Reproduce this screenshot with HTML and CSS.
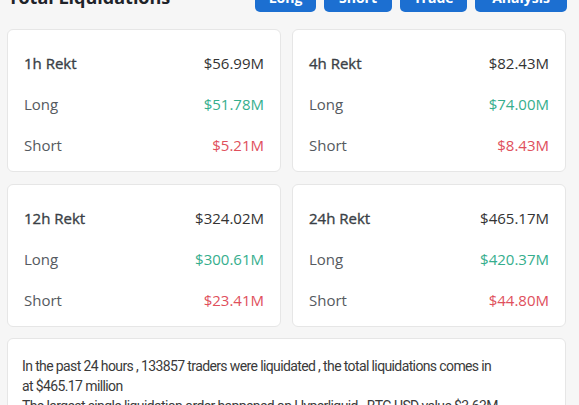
FILE: index.html
```html
<!DOCTYPE html>
<html>
<head>
<meta charset="utf-8">
<link rel="stylesheet" href="styles.css">
</head>
<body>
<div class="page">
  <div class="header">
    <h1 class="title">Total Liquidations</h1>
    <div class="actions">
      <button class="btn btn-long">Long</button>
      <button class="btn btn-short">Short</button>
      <button class="btn btn-trade">Trade</button>
      <button class="btn btn-analysis">Analysis</button>
    </div>
  </div>
  <div class="grid">
    <div class="card">
      <div class="row"><span class="label head">1h Rekt</span><span class="value">$56.99M</span></div>
      <div class="row"><span class="label">Long</span><span class="value up">$51.78M</span></div>
      <div class="row"><span class="label">Short</span><span class="value down">$5.21M</span></div>
    </div>
    <div class="card">
      <div class="row"><span class="label head">4h Rekt</span><span class="value">$82.43M</span></div>
      <div class="row"><span class="label">Long</span><span class="value up">$74.00M</span></div>
      <div class="row"><span class="label">Short</span><span class="value down">$8.43M</span></div>
    </div>
    <div class="card">
      <div class="row"><span class="label head">12h Rekt</span><span class="value">$324.02M</span></div>
      <div class="row"><span class="label">Long</span><span class="value up">$300.61M</span></div>
      <div class="row"><span class="label">Short</span><span class="value down">$23.41M</span></div>
    </div>
    <div class="card">
      <div class="row"><span class="label head">24h Rekt</span><span class="value">$465.17M</span></div>
      <div class="row"><span class="label">Long</span><span class="value up">$420.37M</span></div>
      <div class="row"><span class="label">Short</span><span class="value down">$44.80M</span></div>
    </div>
  </div>
  <div class="summary">
    <p>In the past 24 hours , 133857 traders were liquidated , the total liquidations comes in at $465.17 million</p>
    <p>The largest single liquidation order happened on Hyperliquid - BTC-USD value $3.63M</p>
  </div>
</div>
</body>
</html>
```
FILE: styles.css
```css
* { box-sizing: border-box; }
html, body { margin: 0; padding: 0; }
body {
  background: #f6f6f6;
  font-family: "Open Sans", "Noto Sans", sans-serif;
  color: #333;
  overflow: hidden;
}
.page {
  padding: 0 13px 0 7px;
}
.header {
  display: flex;
  justify-content: space-between;
  align-items: flex-end;
  margin-top: -18px;
  height: 30px;
}
.title {
  margin: 0 0 0 1px;
  font-size: 18px;
  font-weight: 700;
  line-height: 24px;
  color: #1e2329;
  position: relative;
  top: -3px;
}
.actions {
  display: flex;
  gap: 8px;
  margin-right: -1px;
}
.btn {
  height: 30px;
  border: none;
  border-radius: 5px;
  background: #1c6fd1;
  color: #fff;
  font-family: "Open Sans", sans-serif;
  font-size: 14px;
  font-weight: 700;
  padding: 0;
}
.btn-long { width: 61px; }
.btn-short { width: 68px; }
.btn-trade { width: 67px; }
.btn-analysis { width: 92px; }
.grid {
  display: grid;
  grid-template-columns: 1fr 1fr;
  column-gap: 11px;
  row-gap: 12px;
  margin-top: 17px;
}
.card {
  background: #fff;
  border: 1px solid #e6e6e6;
  border-radius: 6px;
  padding: 12px 16px 6px;
}
.row {
  display: flex;
  justify-content: space-between;
  align-items: center;
  height: 41px;
  font-size: 15px;
}
.label { color: #555a60; }
.label.head { color: #3a3f46; -webkit-text-stroke: 0.35px #3a3f46; }
.value { color: #333; }
.value.up { color: #35ae8d; }
.value.down { color: #e0505c; }
.summary {
  margin-top: 11px;
  background: #fff;
  border: 1px solid #e6e6e6;
  border-radius: 6px;
  padding: 17px 66px 17px 14px;
  font-family: "Roboto", sans-serif;
  font-size: 14px;
  line-height: 20px;
  color: #3a3a3a;
  letter-spacing: -0.62px;
}
.summary p { margin: 0; }
```
